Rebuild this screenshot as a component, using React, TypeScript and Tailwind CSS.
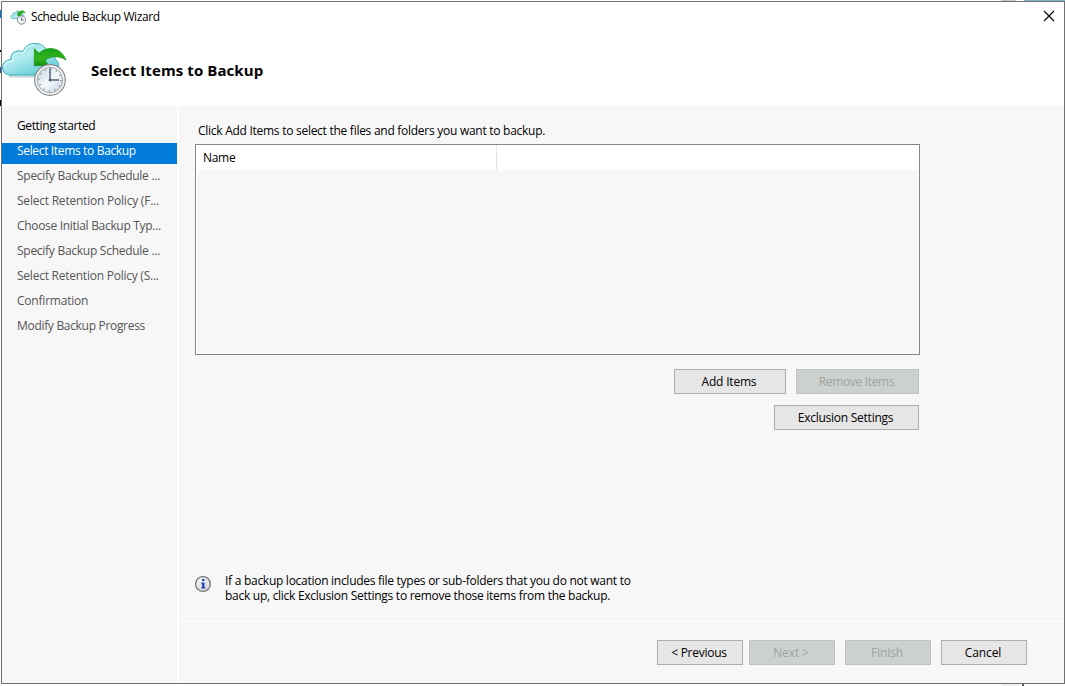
import React from "react";

function CloudIcon({ className, id }: { className: string; id: string }) {
  return (
    <svg className={className} viewBox="0 0 66 56" fill="none">
      <defs>
        <linearGradient id={`${id}-cloud`} x1="0" y1="0" x2="0.7" y2="1">
          <stop offset="0" stopColor="#8edce3" />
          <stop offset="0.45" stopColor="#b5ecf0" />
          <stop offset="1" stopColor="#5fcbd7" />
        </linearGradient>
        <linearGradient id={`${id}-arrow`} x1="0" y1="0" x2="0" y2="1">
          <stop offset="0" stopColor="#16a016" />
          <stop offset="0.6" stopColor="#35b51e" />
          <stop offset="1" stopColor="#129010" />
        </linearGradient>
        <linearGradient id={`${id}-face`} x1="0" y1="0" x2="1" y2="1">
          <stop offset="0" stopColor="#c5d3df" />
          <stop offset="0.5" stopColor="#f3f7fa" />
          <stop offset="1" stopColor="#c9d6e0" />
        </linearGradient>
      </defs>
      <path d="M7 34.500H48" stroke="#b7c4c6" strokeWidth="2" opacity="0.7" />
      <path
        d="M7 33C2.500 32 .5 29 .5 25C.5 21 4 18 9 17.500C8 11 14 7.500 21 9.500C23 4 27 1.500 33 1.500C39 1.500 43 4.500 45 9.500C50 9.500 53 12.500 53 17C56 19 57 22 56 25C55.500 30 53 33 48 33Z"
        fill={`url(#${id}-cloud)`}
        stroke="#35acb8"
      />
      <path d="M2 25C4 20 8 19 10.500 19C10 13 14 9.500 21 11.500C23 5 27 3 33 3" stroke="#d9fafb" strokeWidth="1.300" opacity="0.8" />
      <path
        d="M32.300 6.700L37 11.300C44 4.500 58 3.500 64 18C57 13.500 48 13.500 43 18.500L47 23.700H32.300Z"
        fill={`url(#${id}-arrow)`}
        stroke="#159414"
        strokeWidth="0.700"
      />
      <circle cx="48" cy="38" r="15.300" fill="#f7f7f7" stroke="#858a8d" strokeWidth="1.200" />
      <circle cx="48" cy="38" r="12.700" fill={`url(#${id}-face)`} stroke="#a0a5a8" />
      <circle cx="48" cy="38" r="11" stroke="#7d8c99" strokeWidth="1.700" strokeDasharray="1 4.760" />
      <path d="M48 26.500V38H57" stroke="#506579" strokeWidth="1.500" />
      <circle cx="48" cy="38" r="1.500" fill="#506579" />
    </svg>
  );
}

function SmallCloudIcon() {
  return (
    <svg className="h-4 w-4 shrink-0" viewBox="0 0 16 16" fill="none">
      <path d="M2 9.500C.5 9 .3 6.500 2.500 6C2.500 4 4 3.300 5.200 3.700C6 1.500 10 1 11 4C14 4.500 15 8 12 9.500Z" fill="#a8e6eb" stroke="#58bdc7" strokeWidth="0.800" />
      <path d="M7.500 2L9 3.200C11 .8 14.500 1 15.600 4.500C13.800 3.400 12.200 3.800 11.200 5.300L12.500 7H7.500Z" fill="#28aa20" />
      <circle cx="11.500" cy="11" r="4.200" fill="#eef1f3" stroke="#8b8f92" />
      <path d="M11.500 8.500V11H13.500" stroke="#5b6875" />
    </svg>
  );
}

function WizardButton({
  label,
  size,
  spacing = "tracking-[-0.1px]",
  disabled = false,
}: {
  label: string;
  size: string;
  spacing?: string;
  disabled?: boolean;
}) {
  const colors = disabled
    ? "border-[#bfc2bf] bg-[#ccd1cd] text-[#a0a3a1]"
    : "border-[#adadad] bg-[#e6e6e6] text-black";
  return (
    <button
      disabled={disabled}
      className={`flex h-[25px] shrink-0 items-center justify-center whitespace-pre border pb-px pr-[2px] ${size} ${spacing} ${colors}`}
    >
      {label}
    </button>
  );
}

const steps = [
  { label: "Getting started", spacing: "tracking-[-0.38px]" },
  { label: "Select Items to Backup", spacing: "tracking-[-0.34px]" },
  { label: "Specify Backup Schedule ...", spacing: "tracking-[-0.27px]" },
  { label: "Select Retention Policy (F...", spacing: "tracking-[-0.22px]" },
  { label: "Choose Initial Backup Typ...", spacing: "tracking-[-0.31px]" },
  { label: "Specify Backup Schedule ...", spacing: "tracking-[-0.27px]" },
  { label: "Select Retention Policy (S...", spacing: "tracking-[-0.24px]" },
  { label: "Confirmation", spacing: "tracking-[-0.21px]" },
  { label: "Modify Backup Progress", spacing: "tracking-[-0.31px]" },
];

export default function App() {
  return (
    <div className="relative h-[686px] w-[1065px] overflow-hidden bg-white pl-px pt-px font-['Open_Sans',sans-serif] text-[12px] leading-[15px] text-black">
      <div className="absolute left-0 top-[10px] h-2 w-px bg-[#0078d7]" />
      <div className="absolute left-0 top-[50px] h-[2px] w-px bg-black" />
      <div className="absolute left-0 top-[67px] h-[6px] w-px bg-[#2455ad]" />
      <div className="absolute left-0 top-[100px] h-[6px] w-px bg-black" />
      <div className="absolute left-[1001px] top-0 h-px w-[15px] bg-[#c8c8c8]" />
      <div className="absolute left-[1024px] top-0 h-px w-[41px] bg-[#85b4d5]" />
      <div className="absolute left-[1001px] top-[684px] h-[2px] w-[18px] bg-[#f0f0f0]" />
      <div className="absolute left-[1022px] top-[684px] h-[2px] w-[2px] bg-[#606060]" />

      <main className="flex h-[683px] w-[1064px] flex-col border border-[#707070] bg-white">
        <header className="h-[104px] shrink-0">
          <div className="flex h-[29px] items-center pl-2">
            <SmallCloudIcon />
            <h1 className="ml-[5px] tracking-[-0.37px]">Schedule Backup Wizard</h1>
            <button aria-label="Close" className="mb-px ml-auto mr-[9px]">
              <svg width="12" height="12" viewBox="0 0 12 12" stroke="black" strokeWidth="1.100">
                <path d="M1 1L11 11M11 1L1 11" />
              </svg>
            </button>
          </div>
          <div className="flex h-[75px] pt-[11px]">
            <CloudIcon id="large" className="h-[56px] w-[66px] shrink-0" />
            <h2 className="ml-[23px] mt-[18px] text-[15px] font-bold leading-5 tracking-[0.09px]">
              Select Items to Backup
            </h2>
          </div>
        </header>

        <div className="flex min-h-0 flex-1">
          <nav className="mr-[2px] w-[175px] shrink-0 bg-[#f7f7f7] pt-3">
            {steps.map((step, index) => (
              <div
                key={index}
                className={`mb-1 h-[21px] whitespace-nowrap pl-[15px] ${step.spacing} ${
                  index === 1 ? "bg-[#007bda] text-white" : index === 0 ? "text-black" : "text-[#555555]"
                }`}
              >
                {step.label}
              </div>
            ))}
          </nav>

          <div className="flex min-w-0 flex-1 flex-col bg-[#f7f7f7]">
            <section className="flex flex-1 flex-col pl-4 pt-[17px]">
              <p className="ml-[3px] h-[21px] tracking-[-0.27px]">
                Click Add Items to select the files and folders you want to backup.
              </p>
              <div className="h-[211px] w-[725px] shrink-0 border border-[#828790] bg-white">
                <div className="flex h-[25px] bg-white">
                  <div className="w-[301px] border-r border-[#e5e5e5] pl-[7px] pt-[5px] tracking-[-0.3px]">Name</div>
                </div>
                <div className="mx-px h-[183px] bg-[#f7f7f7]" />
              </div>
              <div className="mt-[14px] flex w-[724px] justify-end gap-[10px]">
                <WizardButton label="Add Items" size="w-[112px]" spacing="tracking-[-0.2px]" />
                <WizardButton label="Remove Items" size="w-[123px]" spacing="tracking-[-0.33px]" disabled />
              </div>
              <div className="mt-[11px] flex w-[724px] justify-end">
                <WizardButton label="Exclusion Settings" size="w-[145px]" spacing="tracking-[-0.25px]" />
              </div>
              <div className="mb-[18px] mt-auto flex">
                <svg className="mt-[3px] h-[17px] w-[17px] shrink-0" viewBox="0.5 0.5 17 17">
                  <defs>
                    <linearGradient id="info-face" x1="0" y1="0" x2="1" y2="1">
                      <stop stopColor="#ffffff" />
                      <stop offset="1" stopColor="#cccccc" />
                    </linearGradient>
                  </defs>
                  <circle cx="8.500" cy="8.500" r="7.400" fill="url(#info-face)" stroke="#777b7e" strokeWidth="1.300" />
                  <path d="M7.500 3.500H10V5.500H7.500ZM6.500 7H10V12H11V13H6.500V12H7.500V8H6.500Z" fill="#2445b5" />
                </svg>
                <p className="ml-[13px] whitespace-nowrap tracking-[-0.275px]">
                  If a backup location includes file types or sub-folders that you do not want to
                  <br />
                  back up, click Exclusion Settings to remove those items from the backup.
                </p>
              </div>
            </section>
            <footer className="flex h-[62px] shrink-0 justify-end border-t border-white pr-[37px] pt-[18px]">
              <WizardButton label="< Previous" size="w-[86px]" spacing="tracking-[-0.25px]" />
              <div className="ml-[6px] flex gap-[10px]">
                <WizardButton label="Next >" size="w-[86px]" disabled />
                <WizardButton label="Finish" size="w-[86px]" disabled />
                <WizardButton label="Cancel" size="w-[86px]" />
              </div>
            </footer>
          </div>
        </div>
      </main>
    </div>
  );
}
